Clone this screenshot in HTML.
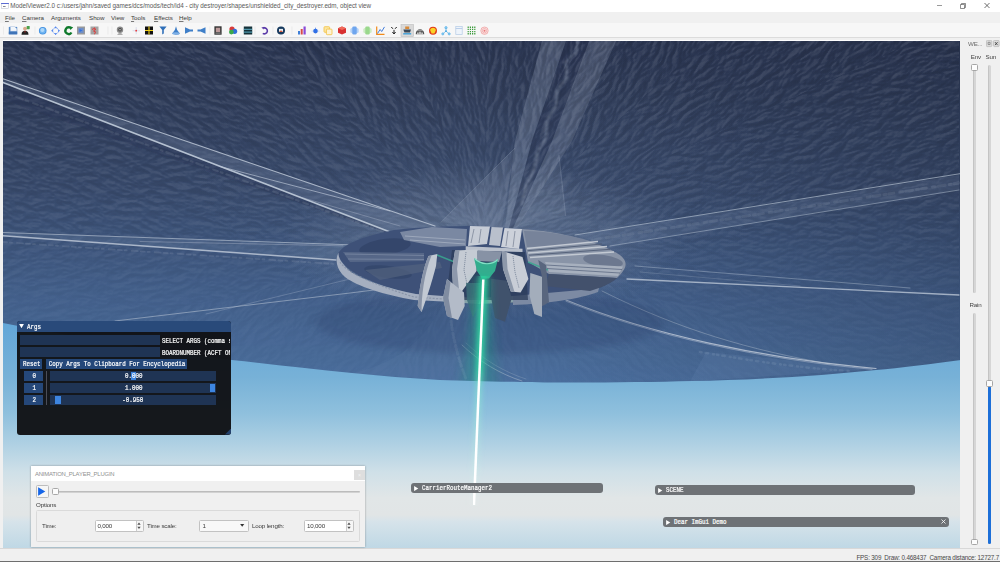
<!DOCTYPE html>
<html lang="en">
<head>
<meta charset="utf-8">
<title>ModelViewer2.0</title>
<style>
*{box-sizing:border-box;margin:0;padding:0}
html,body{width:1000px;height:562px;overflow:hidden;background:#f0f0f0;font-family:"Liberation Sans",sans-serif;color:#222}
.abs{position:absolute}
#titlebar{left:0;top:0;width:1000px;height:12px;background:#fff}
#title{left:10.2px;top:2.3px;font-size:6.32px;line-height:8px;color:#5a5a5a;white-space:nowrap;letter-spacing:-0.02px}
#menubar{left:0;top:12px;width:1000px;height:11px;background:#f0f0f0}
.mi{position:absolute;top:13.8px;font-size:6.2px;line-height:8px;color:#3a3a3a;white-space:nowrap}
.mi u{text-decoration-thickness:0.5px;text-underline-offset:0.6px;text-decoration-color:#777}
#toolbar{left:0;top:23px;width:1000px;height:15px;background:#f7f7f7;border-bottom:1px solid #dcdcdc}
#gap{left:0;top:38px;width:1000px;height:4px;background:#f0f0f0}
#viewport{left:3px;top:41px;width:957.7px;height:507px;overflow:hidden;background:#7fb3d5}
#dock{left:960px;top:41px;width:40px;height:507px;background:#f0f0f0}
#status{left:0;top:548px;width:1000px;height:14px;background:#f0f0f0;border-top:1px solid #d8d8d8}
#status span{position:absolute;right:1px;top:4.7px;font-size:6.3px;line-height:8px;color:#484848;white-space:pre;letter-spacing:-0.18px}
.mono{font-family:"Liberation Mono",monospace;font-size:7.1px;line-height:9.8px;color:#fff;white-space:pre;font-weight:normal;-webkit-text-stroke:0.22px #fff;display:inline-block;transform:scaleX(0.823);transform-origin:0 50%;margin-top:0.45px}
.mono.c{transform-origin:50% 50%}
.btn,.ctr,.clipx{font-size:0;line-height:0}
.btn,.ctr{display:flex;justify-content:center}
.btn .mono,.ctr .mono,.clipx .mono{vertical-align:top}
.clipx{overflow:hidden;white-space:nowrap;height:9.8px}
.ctr{text-align:center;white-space:nowrap;overflow:visible}
/* imgui */
#args{left:16.7px;top:321.4px;width:214.4px;height:113.6px;background:rgba(16,17,20,0.96);border-radius:3px;overflow:hidden}
#args .tb{left:0;top:0;width:215px;height:10.2px;background:#294a7a}
.frame{position:absolute;background:#1f3454}
.btn{position:absolute;background:#25487a;text-align:center;white-space:nowrap;overflow:visible}
.grab{position:absolute;background:#3d85e0}
.igw{position:absolute;height:9.7px;background:#6e7276;border-radius:3px}
.tri{position:absolute;width:0;height:0;border-style:solid}
/* qt panel */
#anim{left:31px;top:466px;width:334px;height:80.5px;background:#f0f0f0;box-shadow:0 0 2px rgba(0,0,0,0.35)}
#anim .tb{left:0;top:0;width:334px;height:15px;background:#fff}
.qt{position:absolute;font-size:6.2px;line-height:8px;color:#3a3a3a;white-space:nowrap;letter-spacing:-0.17px}
.spin{position:absolute;height:12px;background:#fff;border:1px solid #c2c2c2;border-radius:1.5px}
</style>
</head>
<body>
<!-- TITLE BAR -->
<div id="titlebar" class="abs"></div>
<svg class="abs" style="left:0.600px;top:2.500px" width="8" height="6" viewBox="0 0 8 6"><rect x="0.300" y="0.500" width="7.400" height="5" fill="#fff" stroke="#b4b8c4" stroke-width="0.500"/><rect x="0.100" y="0.100" width="7.800" height="0.800" fill="#3b4fd0"/><rect x="2" y="3" width="2.600" height="0.700" fill="#556"/></svg>
<div id="title" class="abs">ModelViewer2.0 c:/users/jahn/saved games/dcs/mods/tech/id4 - city destroyer/shapes/unshielded_city_destroyer.edm, object view</div>
<svg class="abs" style="left:930px;top:0" width="70" height="12" viewBox="0 0 70 12">
 <path d="M7 5.5h5" stroke="#555" stroke-width="0.6" fill="none"/>
 <path d="M30.5 4.5h4v4h-4z M31.5 4.5v-1h4v4h-1" stroke="#444" stroke-width="0.6" fill="none"/>
 <path d="M54.5 3l5 5M59.500 3l-5 5" stroke="#333" stroke-width="0.7" fill="none"/>
</svg>
<!-- MENU -->
<div id="menubar" class="abs"></div>
<div class="mi" style="left:5px"><u>F</u>ile</div>
<div class="mi" style="left:22px"><u>C</u>amera</div>
<div class="mi" style="left:51px">Arguments</div>
<div class="mi" style="left:89px">Show</div>
<div class="mi" style="left:111px">View</div>
<div class="mi" style="left:131px"><u>T</u>ools</div>
<div class="mi" style="left:154px"><u>E</u>ffects</div>
<div class="mi" style="left:179px"><u>H</u>elp</div>
<!-- TOOLBAR -->
<div id="toolbar" class="abs"></div>
<div id="gap" class="abs"></div>
<div class="abs" style="left:3px;top:40.300px;width:957px;height:0.800px;background:#fff"></div>
<svg id="tbicons" class="abs" style="left:0;top:23px" width="500" height="15" viewBox="0 0 500 15">
<!--ICONS-->
<g transform="translate(0 7.500)">
<!-- grip & separators -->
<path d="M3.500 -4v8M35 -4v8M108 -4v8M112 -4v8M210 -4v8M255 -4v8M273 -4v8M292 -4v8" stroke="#e2e2e2" stroke-width="0.600"/>
<!-- 1 save -->
<g transform="translate(13 0)"><path d="M-4.200 -3.600h8.400v7.400h-8.400z" fill="#5288c8"/><path d="M-2.600 -4h4l2.400 2.200v2.600h-6.400z" fill="#f2f6fb" stroke="#9fb8d8" stroke-width="0.400"/><path d="M-4.200 1.200h8.400v2.600h-8.400z" fill="#3f74b8"/></g>
<!-- 2 person -->
<g transform="translate(25.500 0)"><circle cx="-0.500" cy="-1.800" r="1.900" fill="#d9a98a"/><path d="M-4 4.200c0-3 1.500-4 3.500-4s3.500 1 3.500 4z" fill="#222"/><path d="M-1 0.500l0.500 2.500l0.500-2.500z" fill="#c33"/><rect x="1.200" y="-4.500" width="3" height="3.200" rx="0.600" fill="#4aa04a"/></g>
<!-- 3 sphere -->
<g transform="translate(42.700 0.200)"><circle r="3.800" fill="#3f8ee0"/><circle r="3" fill="#6fb4f0"/><circle cx="-0.300" cy="-0.600" r="2" fill="#b4dafa" opacity="0.900"/></g>
<!-- 4 ring arrows -->
<g transform="translate(55.600 0.200)"><circle r="3" fill="none" stroke="#3e78ee" stroke-width="0.900" stroke-dasharray="3.700 1.012" stroke-dashoffset="1.850"/><path d="M-4.200 0h1.400M2.800 0h1.400M0 -4.200v1.400M0 2.800v1.400" stroke="#3e78ee" stroke-width="0.900"/></g>
<!-- 5 green reload -->
<g transform="translate(68.700 0.200)"><path d="M2.800 1.800A3.300 3.300 0 1 1 1.500 -2.900" fill="none" stroke="#0f7a2c" stroke-width="2.300"/><path d="M0.500 -4.600l4 1.200l-2.800 2.600z" fill="#0f7a2c"/></g>
<!-- 6 grey square blue -->
<g transform="translate(81 0)"><rect x="-4" y="-4" width="8" height="8" fill="#9a9a9a"/><rect x="-2.600" y="-2.600" width="5.200" height="5.200" fill="#6f8fc8"/><path d="M-1.500 -1.500l3 1.500l-3 1.500z" fill="#2f6fe0"/></g>
<!-- 7 grey square runner -->
<g transform="translate(94.500 0)"><rect x="-4" y="-4" width="8" height="8" fill="#a4a4a4"/><path d="M0 -3l0.800 2l-1.800 1.500l2 0.800l-1 2.500M-2.500 -1l2-1l2 1.500" stroke="#e23a3a" stroke-width="1" fill="none"/></g>
<!-- 8 webcam -->
<g transform="translate(120 0)"><circle cy="-0.800" r="3.200" fill="#8a8a8a"/><circle cy="-0.800" r="1.700" fill="#444"/><circle cy="-0.800" r="0.700" fill="#ddd"/><path d="M-3 4c1-1.500 5-1.500 6 0z" fill="#666"/></g>
<!-- 9 red cross -->
<g transform="translate(136.200 0.200)"><path d="M-3.600 0h7.200M0 -3.600v7.200" stroke="#c4cce4" stroke-width="0.600"/><circle r="0.900" fill="#e83a3a"/></g>
<!-- 10 quad -->
<g transform="translate(149 0)"><rect x="-4" y="-4" width="8" height="8" fill="#111"/><path d="M-4 0h8M0 -4v8" stroke="#f2d21c" stroke-width="1.100"/></g>
<!-- 11 funnel -->
<g transform="translate(163 0)"><path d="M-3.600 -4h7.200l-2.800 3.600v3.400l-1.600 1v-4.400z" fill="#2f6fb8"/></g>
<!-- 12 cone -->
<g transform="translate(176 0)"><path d="M0 -4.200l1.200 3.600l2.600 3.600c-1.500 1.600-6.100 1.600-7.600 0l2.600-3.600z" fill="#3f7fc8"/><ellipse cy="3" rx="3.800" ry="1.200" fill="#7fb0e6"/></g>
<!-- 13 horn right -->
<g transform="translate(189 0)"><path d="M-4 -3.200l5 2.200h3v2h-3l-5 2.200z" fill="#3f7fc8"/></g>
<!-- 14 horn left -->
<g transform="translate(201.500 0)"><path d="M4 -3.200l-5 2.200h-3v2h3l5 2.200z" fill="#3f7fc8"/></g>
<!-- 15 portrait -->
<g transform="translate(218 0)"><rect x="-3.600" y="-4.200" width="7.200" height="8.400" fill="#333"/><rect x="-2.200" y="-2.800" width="4.400" height="4.400" fill="#b99"/><rect x="-2.600" y="2" width="5.200" height="1.200" fill="#888"/></g>
<!-- 16 rgb -->
<g transform="translate(233 0)"><circle cx="-1" cy="-1.500" r="2.600" fill="#d83a3a"/><circle cx="1.600" cy="0.800" r="2.600" fill="#2f6fd8"/><circle cx="-1.600" cy="1.600" r="2.400" fill="#3aa84a"/></g>
<!-- 17 stripes -->
<g transform="translate(248 0)"><rect x="-4.200" y="-4" width="8.400" height="8" fill="#16323a"/><path d="M-4.200 -1.200h8.400M-4.200 1.600h8.400" stroke="#5fb0c8" stroke-width="1"/></g>
<!-- 18 purple undo -->
<g transform="translate(265 0.300)"><path d="M-1.200 -2.900A3 3 0 1 1 -2.200 2.600" fill="none" stroke="#5a3aa8" stroke-width="1.600"/><path d="M-3.600 -3.400l3 -0.600l-0.800 2.800z" fill="#5a3aa8"/></g>
<!-- 19 dark circle -->
<g transform="translate(281 0)"><circle r="4" fill="#173a5e"/><rect x="-2" y="-1.600" width="4" height="3" fill="#e8eef4"/><path d="M-2 1.400l2-1.600l2 1.600z" fill="#d85a3a"/></g>
<!-- 20 bars -->
<g transform="translate(302 0)"><rect x="-4" y="0.500" width="2" height="3.500" fill="#3f7fd8"/><rect x="-1.300" y="-1.500" width="2" height="5.500" fill="#d84a4a"/><rect x="1.500" y="-4" width="2.200" height="8" fill="#8a4ad8"/></g>
<!-- 21 small blue -->
<g transform="translate(315.500 0.600)"><path d="M-4 0h8" stroke="#a8c4f0" stroke-width="0.600"/><circle r="2.300" fill="#2f6fe6"/><path d="M0 -3.400v1.200" stroke="#2f6fe6" stroke-width="0.700"/></g>
<!-- 22 yellow pages -->
<g transform="translate(328 0)"><rect x="-4" y="-3.800" width="5.600" height="5.600" rx="0.800" fill="#fce6a0" stroke="#f2c040" stroke-width="0.800"/><rect x="-1.600" y="-1.400" width="5.600" height="5.600" rx="0.800" fill="#fdf3d4" stroke="#f2c040" stroke-width="0.800"/></g>
<!-- 23 red cube -->
<g transform="translate(342 0)"><path d="M0 -4l4 1.800v4.400l-4 1.800l-4-1.800v-4.400z" fill="#d83030"/><path d="M0 -4l4 1.800l-4 1.800l-4-1.800z" fill="#f06a5a"/></g>
<!-- 24 blue cyl -->
<g transform="translate(354.500 0)"><rect x="-4.200" y="-2.600" width="8.400" height="5.200" rx="1.600" fill="#b4d2f8"/><rect x="-2.200" y="-3.900" width="4.400" height="7.800" rx="1.200" fill="#6fa6ee"/></g>
<!-- 25 green cyl -->
<g transform="translate(367.500 0)"><rect x="-4.200" y="-2.600" width="8.400" height="5.200" rx="1.600" fill="#cdebc4"/><rect x="-2.200" y="-3.900" width="4.400" height="7.800" rx="1.200" fill="#9ad88c"/></g>
<!-- 26 orange chart -->
<g transform="translate(380.500 0)"><path d="M-3.800 -4v7.800h7.800" fill="none" stroke="#f08a1a" stroke-width="1.200"/><path d="M-3 3l2.600-4l1.600 2l2.800-4.600" fill="none" stroke="#2f6fd8" stroke-width="0.900"/></g>
<!-- 27 black arrows -->
<g transform="translate(394 0)"><path d="M-2.800 -3.200l2 1.400M2.800 -3.200l-2 1.400M0 -0.500v3.500M-1.600 1.500l1.600 2l1.600-2" stroke="#111" stroke-width="0.900" fill="none"/></g>
<!-- 28 selected ship -->
<rect x="401" y="-6" width="12.500" height="12" fill="#d9d9d9" stroke="#bdbdbd" stroke-width="0.600"/>
<g transform="translate(407.200 0)"><rect x="-2" y="-4" width="4" height="2.500" fill="#d88a3a"/><path d="M-3.800 -1h7.600l-1 3h-5.600z" fill="#3a4a5a"/><rect x="-4" y="2.600" width="8" height="1.400" fill="#3f9fd8"/></g>
<!-- 29 dome -->
<g transform="translate(420 0.500)"><path d="M-4.300 3.200c0-6.600 8.600-6.600 8.600 0z" fill="#555"/><path d="M-2.800 3.200v-1.800h1.400v1.800zM-0.700 3.200v-2.400h1.400v2.400zM1.400 3.200v-1.800h1.400v1.800z" fill="#e4e4e4"/><path d="M-3 -0.400h6" stroke="#ddd" stroke-width="0.500"/></g>
<!-- 30 shell -->
<g transform="translate(433 0.200)"><circle r="4" fill="#e23a1a"/><path d="M-2.900 -0.600c0.600-3 5.200-3 5.800 0l-1.500 3.300h-2.800z" fill="#f8d428"/></g>
<!-- 31 cyan person -->
<g transform="translate(446 0.200)"><path d="M0 -2.600v3l-3 2.600M0 0.400l3 2.600" stroke="#5ab4e8" stroke-width="0.700" fill="none"/><circle cy="-3" r="1.200" fill="#8fd0f4" stroke="#3a9ee0" stroke-width="0.500"/><circle cx="-3.200" cy="3.200" r="1.100" fill="#8fd0f4" stroke="#3a9ee0" stroke-width="0.500"/><circle cx="3.200" cy="3.200" r="1.100" fill="#8fd0f4" stroke="#3a9ee0" stroke-width="0.500"/><circle cy="0.400" r="0.900" fill="#3a9ee0"/></g>
<!-- 32 doc -->
<g transform="translate(459 0)"><rect x="-3.200" y="-4" width="6.400" height="8" fill="#eef4fb" stroke="#b4cbe6" stroke-width="0.700"/><path d="M-3.200 -2h6.400" stroke="#b4cbe6" stroke-width="0.900"/></g>
<!-- 33 grid -->
<g transform="translate(471.500 0)"><path d="M-3.300 -4v8M-1.100 -4v8M1.100 -4v8M3.300 -4v8" stroke="#3a9a3a" stroke-width="1.200" stroke-dasharray="1.400 0.800"/></g>
<!-- 34 target -->
<g transform="translate(484.500 0.200)"><circle r="3.700" fill="#fbe4e4" stroke="#ee9a9a" stroke-width="0.700"/><circle r="2.200" fill="none" stroke="#ee9a9a" stroke-width="0.600"/><circle r="1" fill="#e87a7a"/></g>
</g>
<!--/ICONS-->
</svg>
<!-- VIEWPORT -->
<div id="viewport" class="abs">
<svg width="958" height="507" viewBox="3 41 958 507" style="position:absolute;left:0;top:0">
<!--SCENE-->
<defs>
 <linearGradient id="sky" gradientUnits="userSpaceOnUse" x1="0" y1="320" x2="0" y2="548">
  <stop offset="0" stop-color="#62a6d8"/>
  <stop offset="0.25" stop-color="#77b1d7"/>
  <stop offset="0.41" stop-color="#8fc0dd"/>
  <stop offset="0.54" stop-color="#aed0e3"/>
  <stop offset="0.667" stop-color="#cfe0e8"/>
  <stop offset="0.78" stop-color="#e1e6e7"/>
  <stop offset="0.855" stop-color="#e1e5e6"/>
  <stop offset="0.885" stop-color="#d6e3ea"/>
  <stop offset="1" stop-color="#bfd8e5"/>
 </linearGradient>
 <linearGradient id="hull" gradientUnits="userSpaceOnUse" x1="0" y1="41" x2="0" y2="385">
  <stop offset="0" stop-color="#2b3652"/>
  <stop offset="0.15" stop-color="#2f3c59"/>
  <stop offset="0.43" stop-color="#384a6c"/>
  <stop offset="0.72" stop-color="#425e89"/>
  <stop offset="1" stop-color="#4a6e9d"/>
 </linearGradient>
 <radialGradient id="hublight" cx="0.5" cy="0.5" r="0.5">
  <stop offset="0" stop-color="#8c96aa" stop-opacity="0.05"/>
  <stop offset="0.5" stop-color="#8c96aa" stop-opacity="0.03"/>
  <stop offset="1" stop-color="#8c96aa" stop-opacity="0"/>
 </radialGradient>
 <linearGradient id="rdark" gradientUnits="userSpaceOnUse" x1="560" y1="0" x2="960" y2="0">
  <stop offset="0" stop-color="#1c2438" stop-opacity="0"/>
  <stop offset="1" stop-color="#1c2438" stop-opacity="0.22"/>
 </linearGradient>
 <radialGradient id="hubhalo" cx="0.5" cy="0.5" r="0.5">
  <stop offset="0" stop-color="#93a0b4" stop-opacity="0.38"/>
  <stop offset="0.55" stop-color="#93a0b4" stop-opacity="0.2"/>
  <stop offset="1" stop-color="#93a0b4" stop-opacity="0"/>
 </radialGradient>
 <filter id="blur5" x="-50%" y="-20%" width="200%" height="140%"><feGaussianBlur stdDeviation="5 3"/></filter>
 <linearGradient id="texfade" gradientUnits="userSpaceOnUse" x1="0" y1="41" x2="0" y2="385">
  <stop offset="0" stop-color="#fff" stop-opacity="1"/>
  <stop offset="0.5" stop-color="#fff" stop-opacity="0.7"/>
  <stop offset="0.75" stop-color="#fff" stop-opacity="0.3"/>
  <stop offset="1" stop-color="#fff" stop-opacity="0.12"/>
 </linearGradient>
 <mask id="texmask" maskUnits="userSpaceOnUse" x="3" y="41" width="956" height="345"><rect x="3" y="41" width="956" height="345" fill="url(#texfade)"/></mask>
 <filter id="emboss" x="0" y="0" width="100%" height="100%" color-interpolation-filters="sRGB">
  <feTurbulence type="fractalNoise" baseFrequency="0.16 0.26" numOctaves="3" seed="11" result="n"/>
  <feDiffuseLighting in="n" surfaceScale="3.2" diffuseConstant="1" lighting-color="#ffffff" result="l"><feDistantLight azimuth="235" elevation="30"/></feDiffuseLighting>
  <feGaussianBlur in="l" stdDeviation="0.4"/>
 </filter>
 <filter id="glow" x="-600%" y="-5%" width="1300%" height="110%"><feGaussianBlur stdDeviation="2.4 0.5"/></filter>
 <filter id="glow2" x="-600%" y="-5%" width="1300%" height="110%"><feGaussianBlur stdDeviation="6 2"/></filter>
 <filter id="soft"><feGaussianBlur stdDeviation="0.45"/></filter>
 <filter id="soft2"><feGaussianBlur stdDeviation="0.8"/></filter>
 <linearGradient id="beamg" gradientUnits="userSpaceOnUse" x1="0" y1="270" x2="0" y2="505">
  <stop offset="0" stop-color="#2ccf9c" stop-opacity="1"/>
  <stop offset="0.42" stop-color="#35d6a6" stop-opacity="0.95"/>
  <stop offset="0.5" stop-color="#7fe6cf" stop-opacity="0.6"/>
  <stop offset="0.75" stop-color="#b4f0e2" stop-opacity="0.35"/>
  <stop offset="1" stop-color="#e8fff8" stop-opacity="0.1"/>
 </linearGradient>
 <linearGradient id="hazeg" gradientUnits="userSpaceOnUse" x1="0" y1="275" x2="0" y2="390">
  <stop offset="0" stop-color="#2ccf9c" stop-opacity="0.55"/>
  <stop offset="1" stop-color="#2ccf9c" stop-opacity="0.3"/>
 </linearGradient>
 <clipPath id="hullclip"><path d="M3 41H961V360C930 364 900 368 876 370C820 376 750 380 692 381C640 382.500 560 383 520 382C490 381.500 465 381 440 380C410 378 380 376 352 373C310 369 270 364 232 360C150 349 70 336 3 323Z"/></clipPath>
<filter id="embossR" filterUnits="userSpaceOnUse" x="0" y="-1000" width="2000" height="14000" color-interpolation-filters="sRGB">
  <feTurbulence type="turbulence" baseFrequency="0.05 0.12" numOctaves="3" seed="5" result="n"/>
  <feDiffuseLighting in="n" surfaceScale="3.2" diffuseConstant="1" lighting-color="#ffffff" result="l"><feDistantLight azimuth="250" elevation="30"/></feDiffuseLighting>
  <feGaussianBlur in="l" stdDeviation="0.4"/>
 </filter>
<clipPath id="sc0"><path d="M482 243L1071.1 167.5L1072.7 305.1Z"/></clipPath>
<clipPath id="sc1"><path d="M482 243L1071.8 305.0L1047.0 423.3Z"/></clipPath>
<clipPath id="sc2"><path d="M482 243L1074.7 432.2L838.8 752.6Z"/></clipPath>
<clipPath id="sc3"><path d="M482 243L836.6 749.4L482.0 861.1Z"/></clipPath>
<clipPath id="sc4"><path d="M482 243L482.0 861.1L127.4 749.4Z"/></clipPath>
<clipPath id="sc5"><path d="M482 243L118.7 761.8L-137.5 374.7Z"/></clipPath>
<clipPath id="sc6"><path d="M482 243L-98.8 366.4L-111.7 232.6Z"/></clipPath>
<clipPath id="sc7"><path d="M482 243L-114.9 232.6L-83.5 51.6Z"/></clipPath>
<clipPath id="sc8"><path d="M482 243L-91.6 48.8L53.8 -185.2Z"/></clipPath>
<clipPath id="sc9"><path d="M482 243L54.8 -184.2L275.4 -324.7Z"/></clipPath>
<clipPath id="sc10"><path d="M482 243L276.5 -321.6L503.0 -357.5Z"/></clipPath>
<clipPath id="sc11"><path d="M482 243L503.0 -358.9L740.4 -301.1Z"/></clipPath>
<clipPath id="sc12"><path d="M482 243L740.0 -300.3L929.0 -159.5Z"/></clipPath>
<clipPath id="sc13"><path d="M482 243L925.2 -156.1L1022.6 -9.1Z"/></clipPath>
<clipPath id="sc14"><path d="M482 243L1023.1 -9.3L1074.1 167.1Z"/></clipPath>
</defs>
<rect x="3" y="41" width="958" height="507" fill="url(#sky)"/>
<!-- hull -->
<g clip-path="url(#hullclip)">
 <rect x="3" y="41" width="958" height="345" fill="url(#hull)"/>
 <!-- broad shading -->
 <ellipse cx="485" cy="175" rx="300" ry="150" fill="url(#hublight)"/>
 <rect x="560" y="41" width="400" height="345" fill="url(#rdark)"/>
 <ellipse cx="482" cy="240" rx="200" ry="80" fill="url(#hubhalo)"/>
 <path d="M515 148L501.500 227.700L440.600 222.600Z" fill="#93a2b8" opacity="0.16"/>
 <path d="M559 155L565.700 216L516.700 227.700Z" fill="#93a2b8" opacity="0.14"/>
 <path d="M515 148L440.600 222.600M559 155L565.700 216" stroke="#aab6c8" stroke-width="0.700" fill="none" opacity="0.35"/>
 <!-- top band -->
 <path d="M542 41L566 41L532 141L509 228L505 228L515 141Z" fill="#8f9db3" opacity="0.3"/>
 <path d="M589 41L616 41L572 141L517 228L513 228L552 141Z" fill="#8f9db3" opacity="0.27"/>
 <path d="M566 41L589 41L552 141L513 228L509 228L532 141Z" fill="#27324e" opacity="0.3"/>
 <path d="M578 41L576 52L566 62L567 78L557 90L556 106L547 120L546 138L537 152L534 170L526 186L522 204" stroke="#8c99ae" stroke-width="2.800" fill="none" opacity="0.55" stroke-dasharray="2.500 3.500 4 2.500 1.500 3" stroke-linecap="round" filter="url(#soft2)"/>
 <path d="M572 44L570 58L562 70L561 88L552 100L551 118L542 132L540 150L532 166" stroke="#232d47" stroke-width="2" fill="none" opacity="0.25" stroke-dasharray="3 4 2 3" stroke-linecap="round" filter="url(#soft2)"/>
 <g mask="url(#texmask)" style="mix-blend-mode:hard-light" opacity="0.1">
<g clip-path="url(#sc0)"><rect transform="rotate(-0.65 482 243) translate(0 -640)" x="482" y="811.4" width="592" height="143.2" fill="#fff" filter="url(#embossR)"/></g>
<g clip-path="url(#sc1)"><rect transform="rotate(11.85 482 243) translate(0 -1280)" x="482" y="1459.6" width="592" height="126.9" fill="#fff" filter="url(#embossR)"/></g>
<g clip-path="url(#sc2)"><rect transform="rotate(36.35 482 243) translate(0 -1920)" x="482" y="1963.2" width="592" height="399.5" fill="#fff" filter="url(#embossR)"/></g>
<g clip-path="url(#sc3)"><rect transform="rotate(72.50 482 243) translate(0 -2560)" x="482" y="2616.1" width="592" height="373.7" fill="#fff" filter="url(#embossR)"/></g>
<g clip-path="url(#sc4)"><rect transform="rotate(107.50 482 243) translate(0 -3200)" x="482" y="3256.1" width="592" height="373.7" fill="#fff" filter="url(#embossR)"/></g>
<g clip-path="url(#sc5)"><rect transform="rotate(146.50 482 243) translate(0 -3840)" x="482" y="3850.5" width="592" height="464.9" fill="#fff" filter="url(#embossR)"/></g>
<g clip-path="url(#sc6)"><rect transform="rotate(174.50 482 243) translate(0 -4480)" x="482" y="4652.9" width="592" height="140.2" fill="#fff" filter="url(#embossR)"/></g>
<g clip-path="url(#sc7)"><rect transform="rotate(189.85 482 243) translate(0 -5120)" x="482" y="5268.7" width="592" height="188.6" fill="#fff" filter="url(#embossR)"/></g>
<g clip-path="url(#sc8)"><rect transform="rotate(211.85 482 243) translate(0 -5760)" x="482" y="5863.5" width="592" height="279.0" fill="#fff" filter="url(#embossR)"/></g>
<g clip-path="url(#sc9)"><rect transform="rotate(237.50 482 243) translate(0 -6400)" x="482" y="6510.4" width="592" height="265.2" fill="#fff" filter="url(#embossR)"/></g>
<g clip-path="url(#sc10)"><rect transform="rotate(261.00 482 243) translate(0 -7040)" x="482" y="7166.3" width="592" height="233.5" fill="#fff" filter="url(#embossR)"/></g>
<g clip-path="url(#sc11)"><rect transform="rotate(283.70 482 243) translate(0 -7680)" x="482" y="7798.9" width="592" height="248.2" fill="#fff" filter="url(#embossR)"/></g>
<g clip-path="url(#sc12)"><rect transform="rotate(306.70 482 243) translate(0 -8320)" x="482" y="8443.1" width="592" height="239.8" fill="#fff" filter="url(#embossR)"/></g>
<g clip-path="url(#sc13)"><rect transform="rotate(326.50 482 243) translate(0 -8960)" x="482" y="9112.3" width="592" height="181.4" fill="#fff" filter="url(#embossR)"/></g>
<g clip-path="url(#sc14)"><rect transform="rotate(343.85 482 243) translate(0 -9600)" x="482" y="9748.7" width="592" height="188.6" fill="#fff" filter="url(#embossR)"/></g>
 </g>
 <!-- struts -->
 <g stroke="#bcc7d6" fill="none" stroke-linecap="round" filter="url(#soft)">
  <path d="M3 78.700L3 82.500L390 232L435 226Z" fill="#6f80a0" stroke="none" opacity="0.3"/>
  <path d="M3 84L3 100L250 186L390 234L390 232Z" fill="#2a3552" stroke="none" opacity="0.35"/>
  <path d="M3 92L250 183L392 235" stroke-width="2.200" opacity="0.13" stroke-dasharray="5 3 2 4 7 3 3 5"/>
  <path d="M3 78.700L435 226" stroke-width="1.100" opacity="0.85"/>
  <path d="M3 82.500L390 232" stroke-width="1.700" opacity="0.95"/>
  <path d="M220 166.500L390 211" stroke-width="0.900" opacity="0.75"/>
  <path d="M300 197L400 226" stroke-width="0.700" opacity="0.5"/>
  <!-- mid-left band -->
  <path d="M3 232.500L3 235.700L336 260L350 244.800Z" fill="#7f90ad" stroke="none" opacity="0.2"/>
  <path d="M3 232.500L350 244.800" stroke-width="0.900" opacity="0.7"/>
  <path d="M3 235.700L336 260" stroke-width="1.400" opacity="0.85"/>
  <path d="M140 241.500L343 245.800" stroke-width="0.700" opacity="0.5"/>
  <path d="M3 242L120 250L336 264" stroke-width="1.800" opacity="0.14" stroke-dasharray="4 3 2 5 6 3"/>
  <!-- lower-left -->
  <path d="M115 321L350 293L398 287" stroke-width="1" opacity="0.55"/>
  <path d="M206 314L350 279L385 271" stroke-width="0.700" opacity="0.4"/>
  <!-- right upper -->
  <path d="M959 183L592 240" stroke-width="3" opacity="0.12" stroke-dasharray="5 3 2 4 7 3 3 6"/>
  <path d="M960 173.700L575 235" stroke-width="1" opacity="0.65"/>
  <path d="M959 190L610 246" stroke-width="1" opacity="0.5"/>
  <path d="M959 175L959 190L610 246L575 235Z" fill="#7f90ad" stroke="none" opacity="0.16"/>
  <!-- right lower -->
  <path d="M627 279L959 295" stroke-width="1.300" opacity="0.8"/>
  <path d="M635 266L910 288" stroke-width="0.800" opacity="0.5"/>
  <path d="M640 272L800 286" stroke-width="0.600" opacity="0.35"/>
  <!-- lower right diag -->
  <path d="M566 300C650 334 760 358 876 368.500" stroke-width="1.200" opacity="0.85"/>
  <path d="M602 291C680 330 750 350 830 364" stroke-width="0.700" opacity="0.55"/>
  <path d="M690 381.500L706 352L876 369Z" fill="#6f8cb8" stroke="none" opacity="0.16"/>
  <path d="M700 352C760 362 800 368 850 371" stroke-width="2.500" opacity="0.13" stroke-dasharray="1.500 4 2.500 5 1 3"/>
  <path d="M566 301.200C650 335.200 760 359.200 872 369.300" stroke-width="0.800" opacity="0.6"/>
  <!-- lower center -->
  <path d="M462 345C480 362 500 374 522 381" stroke-width="0.800" opacity="0.55"/>
  <path d="M466 343C484 360 504 372 526 379" stroke-width="0.600" opacity="0.4"/>
  <path d="M445 300C425 340 400 362 352 373.500L470 382L470 300Z" fill="#7890b8" stroke="none" opacity="0.1"/>
  <path d="M450 312C452 335 458 358 466 379" stroke-width="3" opacity="0.13" stroke-dasharray="1 2.500 2 3.500 1.500 2"/>
 </g>
 <ellipse cx="490" cy="322" rx="175" ry="32" fill="#22325a" opacity="0.2" filter="url(#blur5)"/>
 <!-- central disc -->
 <!-- rim back + recess (left half dark) -->
 <path d="M338.500 252.700C345 243 365 236 394 230C420 227 450 226 477 226L522 229C560 231 600 242 620 255C628 262 628 267 617 278C600 292 560 300 513 303C480 304 445 297 415 294C385 288 355 276 346 266C340 260 338 256 338.500 252.700Z" fill="#3e5178"/>
 <ellipse cx="385" cy="247" rx="26" ry="8" fill="#324468" opacity="0.8" transform="rotate(-8 385 247)"/>
 <ellipse cx="388" cy="272" rx="24" ry="6" fill="#324468" opacity="0.7" transform="rotate(8 388 272)"/>
 <!-- left lower rim -->
 <path d="M338.500 252.700C338 257 341 263 351 272C365 281 390 289 416 294L443 296L443 301.500L414 300C385 295 356 286 345 277C336 269 335 259 338.500 252.700Z" fill="#a5afc0"/>
 <path d="M340 262C346 272 372 284 414 297L443 299" stroke="#7d899e" stroke-width="1.200" fill="none" stroke-dasharray="2 1.500" opacity="0.7"/>
 <path d="M513 296L581 290L600 284L598 292C580 299 545 304 513 305Z" fill="#7c8aa3"/>
 <!-- right lit surface -->
 <path d="M522 229C560 231 600 242 620 255C628 262 628 267 617 278L549 274L528 262Z" fill="#8994a7"/>
 <path d="M524 231C545 231 570 235 590 241L560 246L527 247Z" fill="#77839a"/>
 <path d="M527 248.500L598 241.500M528 253L607 246.500M530 257.500L614 252" stroke="#c9ced7" stroke-width="1.700" fill="none" opacity="0.9"/>
 <path d="M527.500 250.700L602 244M529 255.200L610 249.300" stroke="#4d5a73" stroke-width="1" fill="none" opacity="0.85"/>
 <ellipse cx="603" cy="261" rx="20" ry="6" fill="#6c788f" transform="rotate(8 603 261)"/>
 <path d="M545 262L623 266.500L618 276L549 272Z" fill="#a7b0be"/>
 <path d="M546 265L622 269.500M547 268.500L620 273" stroke="#5a6780" stroke-width="0.900" fill="none" opacity="0.85"/>
 <path d="M549 274L617 278C610 284 600 288 590 291L545 286Z" fill="#43516c"/>
 <!-- left recess panels -->
 <path d="M400 232L432 227L467 229L466 246L440 247L404 240Z" fill="#8592a9" opacity="0.85"/>
 <path d="M405 236L465 240M410 240L465 244" stroke="#c0c8d4" stroke-width="0.700" fill="none" opacity="0.7"/>
 <path d="M343 252L424 253L424 261L350 262Z" fill="#5c6d8c" opacity="0.8"/>
 <path d="M345 254L424 255.500M348 259L424 259.500" stroke="#93a1b8" stroke-width="0.600" fill="none" opacity="0.8"/>
 <path d="M365 270L440 262L442 268L380 280Z" fill="#52627f" opacity="0.7"/>
 <path d="M443 296L478 298L513 296L513 302.500L478 304L443 301.500Z" fill="#8ea9ad" opacity="0.9"/>
 <!-- hub top panels -->
 <path d="M470 226L490 226.500L487 244L468 246Z" fill="#c6ccd6"/>
 <path d="M491.500 227L503 227.500L500 246L489 245Z" fill="#b9c0cc"/>
 <path d="M504.500 228L522 229L519 249L501 247Z" fill="#ccd1da"/>
 <path d="M474 229L471 243M481 229L479 243M508 231L506 246M515 231L513 247" stroke="#5f6b80" stroke-width="0.800" opacity="0.7"/>
 <!-- claws -->
 <path d="M452 250L525 252L528 300L446 300Z" fill="#2b3b58" opacity="0.75"/>
 <path d="M465.700 246.300L522.500 248.800L522.500 252L465.700 250.500Z" fill="#b9c0cc"/>
 <path d="M477.500 250.500L502 251.500L499 262L476.800 261Z" fill="#8792a5"/>
 <path d="M437 255L457 263M528 262L548 270" stroke="#3aa890" stroke-width="1.400" fill="none" opacity="0.85"/>
 <path d="M437.300 254L428.500 256C423 268 419 290 417.700 306L421.600 312C426 300 432 282 436 266Z" fill="#c2c9d3"/>
 <path d="M428.500 256C423 268 419 290 417.700 306L421.600 312C421.500 296 424 274 431.500 255.500Z" fill="#8893a7"/>
 <path d="M455 250.400L477.500 249.400L476.500 271L461.800 291.500L453 286.600L452 269Z" fill="#c5cbd4"/>
 <path d="M455 250.400L459.500 250.200L457 269L459 289.800L453 286.600L452 269Z" fill="#8d98ab"/>
 <path d="M466 252L464 270L467 284" stroke="#6d7a90" stroke-width="0.900" fill="none" stroke-dasharray="1.200 0.800" opacity="0.8"/>
 <path d="M447 279L464 292.500L464.700 306L458 320L447 316L443 298Z" fill="#b3bbc8"/>
 <path d="M447 279L450.500 282L448.500 298L452 318L447 316L443 298Z" fill="#808ca1"/>
 <path d="M502 251L522.500 257L528.400 279L520.600 292.500L510.800 291.500L503 269Z" fill="#c8cdd6"/>
 <path d="M502 251L506.500 252.300L507.500 269L514.500 291.900L510.800 291.500L503 269Z" fill="#8d98aa"/>
 <path d="M513 256L515 272L519 288" stroke="#6d7a90" stroke-width="0.900" fill="none" stroke-dasharray="1.200 0.800" opacity="0.8"/>
 <path d="M530.300 273L542 276.800L542 317L534.300 314L529.400 294.500Z" fill="#a3adbb"/>
 <path d="M538.200 260L546 265L549 302.300L542 306.200L542 276.800Z" fill="#59667e"/>
 <path d="M491.200 278.800L506.800 280.700L511.700 298.300L505 321.800L495 318L491.200 298.300Z" fill="#40526c"/>
 <path d="M466 283L480 283L480 300L473 318L467 300Z" fill="#3f6b78" opacity="0.85"/>
 <!-- emitter -->
 <path d="M474 258C480 264 492 264.500 498 259L495 271L489 278.500L482 278.500L477 271Z" fill="#33ad8e"/>
 <path d="M474.500 258.500C481 265 492 265.500 497.700 259.500" stroke="#86dec6" stroke-width="1.100" fill="none"/>
 <!-- green haze on hull -->
 <path d="M477 280L489 280L499 386L459 386Z" fill="#1f9f80" opacity="0.24" filter="url(#blur5)"/>
 <path d="M483.300 276L477.700 392" stroke="url(#hazeg)" stroke-width="9" filter="url(#glow2)" fill="none"/>
</g>
<!-- beam -->
<path d="M483.400 276L473.900 506" stroke="url(#beamg)" stroke-width="7" filter="url(#glow)" fill="none"/>
<path d="M483.300 279.500L473.950 505" stroke="#fff" stroke-width="2.500" fill="none" stroke-linecap="butt" filter="url(#soft)"/>
<!--/SCENE-->
</svg>
</div>
<!-- DOCK -->
<div id="dock" class="abs"></div>
<!--DOCKCONTENT-->
<div class="qt" style="left:968px;top:40.200px;font-size:6.200px;color:#6a6a6a">WE...</div>
<svg class="abs" style="left:985.900px;top:40.300px" width="14.100" height="8" viewBox="0 0 14.100 8"><rect x="0.400" y="0.400" width="5.400" height="6.200" rx="1" fill="#dcdcdc" stroke="#b4b4b4" stroke-width="0.700"/><path d="M2.100 4.500h2v-2.200h-2z" fill="none" stroke="#555" stroke-width="0.500"/><rect x="7.500" y="0.400" width="5.600" height="6.200" rx="1" fill="#dcdcdc" stroke="#b4b4b4" stroke-width="0.700"/><path d="M9 2.100l2.600 3M11.600 2.100l-2.600 3" stroke="#333" stroke-width="0.800"/></svg>
<div class="qt" style="left:970.800px;top:53px;font-size:6.200px;color:#444">Env</div>
<div class="qt" style="left:985.500px;top:53px;font-size:6.200px;color:#444">Sun</div>
<div class="qt" style="left:969.500px;top:301px;font-size:6.200px;color:#444">Rain</div>
<!-- sliders -->
<div class="abs" style="left:973px;top:65px;width:3px;height:228px;background:#d6d6d6;border-radius:1.500px;border-left:0.500px solid #c4c4c4"></div>
<div class="abs" style="left:971.100px;top:64.300px;width:6.500px;height:6.500px;background:#fdfdfd;border:0.700px solid #a6a6a6;border-radius:1.500px"></div>
<div class="abs" style="left:988px;top:65px;width:3px;height:479px;background:#d6d6d6;border-radius:1.500px;border-left:0.500px solid #c4c4c4"></div>
<div class="abs" style="left:988px;top:386px;width:3px;height:158px;background:#1d6fd8;border-radius:1.500px"></div>
<div class="abs" style="left:986.200px;top:380px;width:6.500px;height:6.500px;background:#fdfdfd;border:0.700px solid #a6a6a6;border-radius:1.500px"></div>
<div class="abs" style="left:973px;top:313px;width:3px;height:231px;background:#d6d6d6;border-radius:1.500px;border-left:0.500px solid #c4c4c4"></div>
<div class="abs" style="left:971.100px;top:538.500px;width:6.500px;height:6.500px;background:#fdfdfd;border:0.700px solid #a6a6a6;border-radius:1.500px"></div>
<!--/DOCKCONTENT-->
<!-- STATUS -->
<div id="status" class="abs"><span>FPS: 309  Draw: 0.468437  Camera distance: 12727.7</span></div>
<div class="abs" style="left:0;top:560.800px;width:1000px;height:1.200px;background:#6e6e6e"></div>
<!--PANELS-->
<!-- ARGS (imgui) -->
<div id="args" class="abs">
 <div class="tb abs"></div>
 <svg class="abs" style="left:2.300px;top:2.400px" width="5" height="4.400" viewBox="0 0 5 4.400"><path d="M0.150 0.100h4.700l-2.350 4.100z" fill="#fff"/></svg>
 <div class="mono abs" style="left:10.300px;top:0.800px">Args</div>
 <div class="frame" style="left:3.500px;top:14px;width:140px;height:9.800px"></div>
 <div class="abs clipx" style="left:145.500px;top:14.800px;width:67.500px"><span class="mono">SELECT ARGS (comma separated)</span></div>
 <div class="frame" style="left:3.500px;top:26px;width:140px;height:9.800px"></div>
 <div class="abs clipx" style="left:145.500px;top:26.800px;width:67.500px"><span class="mono">BOARDNUMBER (ACFT ONLY)</span></div>
 <div class="btn" style="left:3.500px;top:38px;width:22px;height:9.800px"><span class="mono c">Reset</span></div>
 <div class="btn" style="left:29.500px;top:38px;width:141px;height:9.800px"><span class="mono c">Copy Args To Clipboard For Encyclopedia</span></div>
 <div class="abs" style="left:29.600px;top:50px;width:0.600px;height:34px;background:#4a4d58"></div>
 <div class="btn" style="left:7.700px;top:50px;width:18.600px;height:9.800px"><span class="mono c">0</span></div>
 <div class="frame" style="left:33.500px;top:50px;width:166px;height:9.800px"></div>
 <div class="grab" style="left:114.300px;top:51px;width:4.600px;height:7.800px"></div>
 <div class="abs ctr" style="left:33.500px;top:50px;width:166px;height:9.800px"><span class="mono c">0.000</span></div>
 <div class="btn" style="left:7.700px;top:62px;width:18.600px;height:9.800px"><span class="mono c">1</span></div>
 <div class="frame" style="left:33.500px;top:62px;width:166px;height:9.800px"></div>
 <div class="grab" style="left:193px;top:63px;width:5.400px;height:7.800px"></div>
 <div class="abs ctr" style="left:33.500px;top:62px;width:166px;height:9.800px"><span class="mono c">1.000</span></div>
 <div class="btn" style="left:7.700px;top:74px;width:18.600px;height:9.800px"><span class="mono c">2</span></div>
 <div class="frame" style="left:33.500px;top:74px;width:166px;height:9.800px"></div>
 <div class="grab" style="left:38.500px;top:75px;width:5.400px;height:7.800px"></div>
 <div class="abs ctr" style="left:33.500px;top:74px;width:166px;height:9.800px"><span class="mono c">-0.950</span></div>
 <svg class="abs" style="right:0;bottom:0" width="6.500" height="6.500" viewBox="0 0 6.500 6.500"><path d="M6.500 0v6.500h-6.500z" fill="#24426e"/></svg>
</div>
<!-- collapsed imgui windows -->
<div class="igw" style="left:411px;top:483.200px;width:192px"><svg class="abs" style="left:3px;top:2.700px" width="4.500" height="5.200" viewBox="0 0 4.500 5.200"><path d="M0.100 0.100l4.200 2.500l-4.200 2.500z" fill="#fff"/></svg><div class="mono abs" style="left:11px;top:0.700px">CarrierRouteManager2</div></div>
<div class="igw" style="left:655px;top:485.200px;width:260px"><svg class="abs" style="left:3px;top:2.700px" width="4.500" height="5.200" viewBox="0 0 4.500 5.200"><path d="M0.100 0.100l4.200 2.500l-4.200 2.500z" fill="#fff"/></svg><div class="mono abs" style="left:11px;top:0.700px">SCENE</div></div>
<div class="igw" style="left:663px;top:517.200px;width:286px"><svg class="abs" style="left:3px;top:2.700px" width="4.500" height="5.200" viewBox="0 0 4.500 5.200"><path d="M0.100 0.100l4.200 2.500l-4.200 2.500z" fill="#fff"/></svg><div class="mono abs" style="left:11px;top:0.700px">Dear ImGui Demo</div>
<svg class="abs" style="left:278px;top:2.300px" width="5" height="5" viewBox="0 0 5 5"><path d="M0.500 0.500L4.500 4.500M4.500 0.500L0.500 4.500" stroke="#fff" stroke-width="0.800"/></svg></div>
<!-- ANIMATION PLAYER (Qt) -->
<div id="anim" class="abs">
 <div class="tb abs"></div>
 <div class="qt" style="left:4px;top:3.800px;color:#909090;font-size:5.900px;letter-spacing:-0.180px">ANIMATION_PLAYER_PLUGIN</div>
 <div class="abs" style="left:323px;top:3.500px;width:10.500px;height:10px;background:#dedede"></div>
 <div class="qt" style="left:327px;top:4.500px;color:#f4f4f4;font-size:5px">×</div>
 <div class="abs" style="left:5px;top:19px;width:12.500px;height:12.500px;background:#f6f6f6;border:1px solid #bdbdbd;border-radius:1.500px"></div>
 <svg class="abs" style="left:7.400px;top:21px" width="7.600" height="9" viewBox="0 0 7.600 9"><path d="M0.100 0.200l7.200 4.300l-7.200 4.300z" fill="#1565e8"/></svg>
 <div class="abs" style="left:24px;top:24.500px;width:305px;height:2px;background:#d2d2d2;border-radius:1px;border-top:0.500px solid #bcbcbc"></div>
 <div class="abs" style="left:21px;top:22px;width:6.500px;height:7px;background:#fcfcfc;border:0.700px solid #a8a8a8;border-radius:1.500px"></div>
 <div class="qt" style="left:5px;top:34.500px">Options</div>
 <div class="abs" style="left:5px;top:44px;width:324px;height:31.500px;border:0.700px solid #dadada;border-radius:1.500px;background:#efefef"></div>
 <div class="qt" style="left:11px;top:55.500px">Time:</div>
 <div class="spin" style="left:63.500px;top:53.500px;width:49.500px"><span class="qt" style="left:2px;top:1.500px">0,000</span><span class="abs" style="right:0;top:0;width:7.500px;height:10px;border-left:0.600px solid #ccc;background:#f6f6f6"></span><svg class="abs" style="right:1.600px;top:1.600px" width="4" height="7.400" viewBox="0 0 4 7.400"><path d="M2 0.400l1.700 2.300h-3.400zM2 7l1.700-2.300h-3.400z" fill="#505050"/></svg></div>
 <div class="qt" style="left:116px;top:55.500px">Time scale:</div>
 <div class="spin" style="left:168px;top:53.500px;width:50px;background:#f8f8f8"><span class="qt" style="left:2.500px;top:1.500px">1</span><svg class="abs" style="right:3.300px;top:3.800px" width="4.400" height="2.800" viewBox="0 0 4.400 2.800"><path d="M0.100 0.100h4.200l-2.100 2.600z" fill="#333"/></svg></div>
 <div class="qt" style="left:221px;top:55.500px">Loop length:</div>
 <div class="spin" style="left:273px;top:53.500px;width:50px"><span class="qt" style="left:2px;top:1.500px">10,000</span><span class="abs" style="right:0;top:0;width:7.500px;height:10px;border-left:0.600px solid #ccc;background:#f6f6f6"></span><svg class="abs" style="right:1.600px;top:1.600px" width="4" height="7.400" viewBox="0 0 4 7.400"><path d="M2 0.400l1.700 2.300h-3.400zM2 7l1.700-2.300h-3.400z" fill="#505050"/></svg></div>
</div>
<!--/PANELS-->
</body>
</html>
